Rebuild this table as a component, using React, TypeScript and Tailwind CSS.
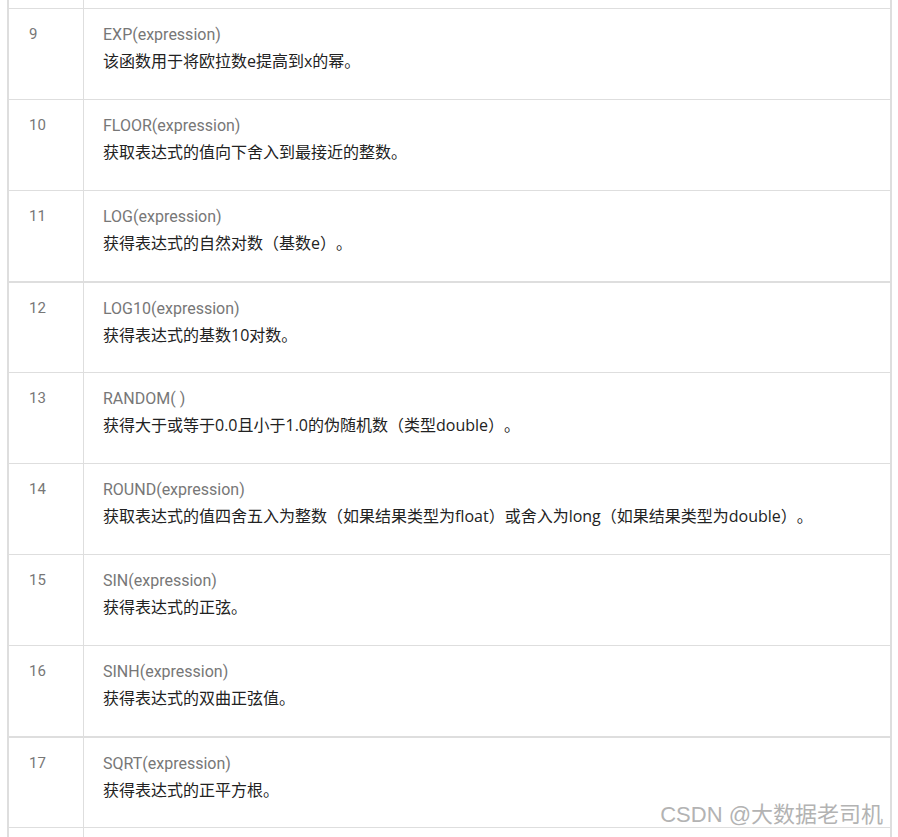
const rows = [
  { n: 9, name: "EXP(expression)", desc: "该函数用于将欧拉数e提高到x的幂。" },
  { n: 10, name: "FLOOR(expression)", desc: "获取表达式的值向下舍入到最接近的整数。" },
  { n: 11, name: "LOG(expression)", desc: "获得表达式的自然对数（基数e）。" },
  { n: 12, name: "LOG10(expression)", desc: "获得表达式的基数10对数。", thick: true },
  { n: 13, name: "RANDOM( )", desc: "获得大于或等于0.0且小于1.0的伪随机数（类型double）。" },
  {
    n: 14,
    name: "ROUND(expression)",
    desc: "获取表达式的值四舍五入为整数（如果结果类型为float）或舍入为long（如果结果类型为double）。",
  },
  { n: 15, name: "SIN(expression)", desc: "获得表达式的正弦。" },
  { n: 16, name: "SINH(expression)", desc: "获得表达式的双曲正弦值。" },
  { n: 17, name: "SQRT(expression)", desc: "获得表达式的正平方根。", thick: true },
]

export default function App() {
  return (
    <div
      className="relative h-[837px] w-[898px] overflow-hidden bg-white"
      style={{ fontFamily: "Roboto, 'Noto Sans CJK SC', sans-serif" }}
    >
      <div className="ml-[7px] w-[885px] border-x-2 border-[#dedede]">
        {/* tail of row 8 */}
        <div className="flex h-[8px]">
          <div className="w-[75px] border-r border-[#dedede]" />
          <div className="flex-1" />
        </div>
        {rows.map((r) => (
          <div
            key={r.n}
            className={
              "flex h-[91px] border-t border-[#dedede]" +
              (r.thick ? " border-t-2" : "")
            }
          >
            <div className="w-[75px] shrink-0 border-r border-[#dedede] pl-[20px] pt-[12px] text-[15px] leading-[27px] text-[#777]">
              {r.n}
            </div>
            <div className="flex-1 pl-[19px] pt-[12px] leading-[27px]">
              <div className="text-[16px] text-[#777]">{r.name}</div>
              <div
                className="text-[16px] text-[#222] [text-spacing-trim:space-all]"
                style={{ fontFamily: "'Open Sans', 'Noto Sans CJK SC', sans-serif" }}
              >
                {r.desc}
              </div>
            </div>
          </div>
        ))}
        <div className="flex h-[20px] border-t border-[#dedede]">
          <div className="w-[75px] border-r border-[#dedede]" />
          <div className="flex-1" />
        </div>
      </div>
      <div
        className="absolute right-[15px] top-[800px] text-[22px] leading-[30px] text-[#b3b3b3]"
        style={{
          fontFamily: "'Liberation Sans', 'Noto Sans CJK SC', sans-serif",
          textShadow: "0 0 2px #fff, 0 0 2px #fff",
        }}
      >
        CSDN @大数据老司机
      </div>
    </div>
  )
}
